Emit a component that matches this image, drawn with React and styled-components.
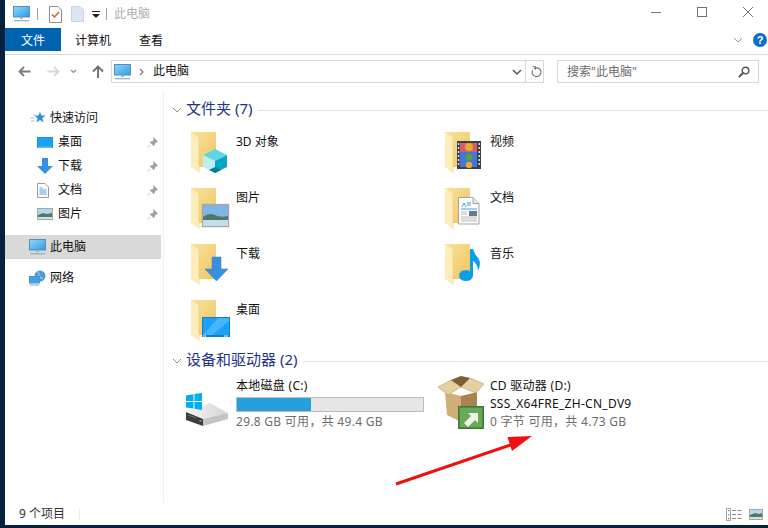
import React from "react";
import styled, { createGlobalStyle } from "styled-components";

const Global = createGlobalStyle`
  html, body { margin: 0; padding: 0; width: 768px; height: 528px; overflow: hidden; background: #04203c; }
  * { box-sizing: border-box; }
`;
const FONT = `"Noto Sans", "Noto Sans CJK SC", sans-serif`;

const Screen = styled.div`
  width: 768px; height: 528px; display: flex; position: relative;
  background: #06213d; font-family: ${FONT}; font-size: 12px; color: #111; line-height: 16px;
`;
const Win = styled.div`
  margin-left: 5px; width: 763px; height: 525px; background: #fff; display: flex; flex-direction: column;
`;
const TitleBar = styled.div`
  height: 28px; display: flex; align-items: center; padding-left: 8px; flex: none;
`;
const TitleSep = styled.span`
  width: 1px; height: 12px; background: #a0a0a0; margin: 0 ${(p) => p.$r}px 0 ${(p) => p.$l}px;
`;
const Spacer = styled.span`
  width: ${(p) => p.$w}px; flex: none;
`;
const TitleText = styled.span`
  color: #b0b0b0;
`;
const WinButtons = styled.div`
  margin-left: auto; display: flex; height: 100%;
`;
const WinButton = styled.div`
  width: ${(p) => p.$w || 46}px; margin-left: ${(p) => p.$ml || 0}px; height: 24px; display: flex; align-items: center; justify-content: center;
`;
const Ribbon = styled.div`
  height: 27px; flex: none; display: flex; border-bottom: 1px solid #dadada; padding-bottom: 2px;
`;
const FileTab = styled.div`
  width: 56px; height: 23px; padding-top: 2px; background: #0063b1; color: #fff; display: flex; align-items: center; justify-content: center;
`;
const Tab = styled.div`
  height: 23px; padding-top: 2px; display: flex; align-items: center; margin-left: ${(p) => p.$ml}px;
`;
const RibbonEnd = styled.div`
  margin-left: auto; display: flex; align-items: center; gap: 10px; padding-right: 1px; height: 24px;
`;
const AddressRow = styled.div`
  height: 36px; flex: none; display: flex; align-items: flex-start; padding: 5px 0 0 13px;
`;
const NavButtons = styled.div`
  width: 93px; height: 22px; display: flex; align-items: center;
`;
const AddressBox = styled.div`
  width: 433px; height: 23px; border: 1px solid #d9d9d9; display: flex; align-items: center; padding-left: 2px;
`;
const Crumb = styled.span`
  margin-left: 9px; padding-bottom: 1px;
`;
const AddressEnd = styled.div`
  margin-left: auto; display: flex; align-items: center; height: 100%;
`;
const AddressDivider = styled.span`
  width: 1px; height: 21px; background: #d9d9d9;
`;
const SearchBox = styled.div`
  width: 202px; height: 23px; margin-left: 13px; border: 1px solid #d9d9d9; display: flex; align-items: center;
  justify-content: space-between; padding: 0 8px 0 9px; color: #6d6d6d;
`;
const Main = styled.div`
  flex: 1; display: flex; min-height: 0;
`;
const Sidebar = styled.nav`
  width: 159px; flex: none; border-right: 1px solid #f0f0f0; padding: 15px 2px 0 0;
`;
const NavRow = styled.div`
  height: 24px; display: flex; align-items: center; margin-top: ${(p) => p.$mt || 0}px;
  padding-left: ${(p) => (p.$deep ? 32 : 24)}px; background: ${(p) => (p.$active ? "#d9d9d9" : "transparent")};
`;
const NavIconSlot = styled.span`
  width: 21px; height: 20px; flex: none; display: flex; align-items: center; padding-left: ${(p) => p.$pl || 0}px;
`;
const Pin = styled.span`
  margin-left: auto; margin-right: 3px; display: flex;
`;
const Content = styled.main`
  flex: 1; padding-top: 9px; min-width: 0;
`;
const SectionHead = styled.div`
  height: 20px; display: flex; align-items: center; margin-left: 8px; color: #1e3287; font-size: 15px;
  margin-top: ${(p) => p.$mt || 0}px;
`;
const SectionTitle = styled.span`
  margin-left: 4px; white-space: nowrap; padding-bottom: 4px;
`;
const SectionLine = styled.span`
  flex: 1; height: 1px; background: #e2e2e2; margin-left: 6px;
`;
const FolderGrid = styled.div`
  margin: 6px 0 0 26px; display: grid; grid-template-columns: 254px 254px; grid-auto-rows: 56px;
`;
const FolderTile = styled.div`
  display: flex; padding-top: 4px;
`;
const TileLabel = styled.span`
  margin: 4px 0 0 -2px;
`;
const DriveGrid = styled.div`
  margin: 6px 0 0 21px; display: grid; grid-template-columns: 254px 254px;
`;
const DriveTile = styled.div`
  display: flex;
`;
const DriveIcon = styled.div`
  width: 51px; height: 56px; margin-top: -2px; flex: none;
`;
const DriveInfo = styled.div`
  display: flex; flex-direction: column; width: 188px;
`;
const DriveLine = styled.div`
  height: ${(p) => p.$h}px; line-height: ${(p) => p.$lh || p.$h}px; margin-bottom: ${(p) => p.$mb || 0}px;
  white-space: nowrap; letter-spacing: .28px; color: ${(p) => (p.$muted ? "#6d6d6d" : "#111")};
`;
const Bar = styled.div`
  height: 15px; width: 188px; background: #e6e6e6; border: 1px solid #bcbcbc; flex: none;
`;
const BarFill = styled.div`
  height: 100%; background: #26a0da;
`;
const StatusBar = styled.footer`
  height: 22px; flex: none; display: flex; align-items: center; padding: 0 5px 0 14px; color: #333;
`;
const StatusSep = styled.span`
  width: 1px; height: 12px; background: #eee; margin-left: 14px;
`;
const StatusIcons = styled.div`
  margin-left: auto; display: flex; align-items: center; gap: 7px;
`;
const RedArrow = styled.svg`
  position: absolute; left: 390px; top: 430px;
`;
const IconSvg = styled.svg`
  flex: none; overflow: visible; display: block;
`;

const Monitor = () => (
  <svg width={17} height={16} viewBox="0 0 17 16">
    <defs>
      <linearGradient id="mon" x1="0" y1="0" x2="1" y2="1">
        <stop offset="0" stopColor="#8fd8fb" />
        <stop offset="1" stopColor="#2b9be8" />
      </linearGradient>
    </defs>
    <rect x="0.5" y="0.5" width="16" height="10.5" fill="url(#mon)" stroke="#5a8fb5" />
    <rect x="7" y="11" width="3" height="2" fill="#9ab4c6" />
    <rect x="1" y="14" width="15" height="1.3" fill="#9cb3c4" />
  </svg>
);
const Check = () => (
  <svg width="13" height="17" viewBox="0 0 13 17">
    <path d="M.5.5H9L12.5 4V16.5H.5Z" fill="#fff" stroke="#8d8d8d" />
    <path d="M3 8.5l2.5 2.5L10 6" fill="none" stroke="#e0552a" strokeWidth="1.4" />
  </svg>
);
const BlankDoc = () => (
  <svg width="13" height="16" viewBox="0 0 13 16">
    <path d="M.5.5H9L12.5 4V15.5H.5Z" fill="#dde6f3" stroke="#c9d6e8" />
  </svg>
);
const Chev = ({ d = "M1 1l4 4 4-4", w = 10, h = 6, c = "#888", sw = 1 }) => (
  <IconSvg width={w} height={h} viewBox={`0 0 ${w} ${h}`}>
    <path d={d} fill="none" stroke={c} strokeWidth={sw} />
  </IconSvg>
);
const ArrowBack = () => (
  <IconSvg width="13" height="11" viewBox="0 0 13 11">
    <path d="M12.5 5.5H2M6 1L1.5 5.5 6 10" fill="none" stroke="#7b7b7b" strokeWidth="1.8" />
  </IconSvg>
);
const ArrowForward = () => (
  <IconSvg width="13" height="11" viewBox="0 0 13 11">
    <path d="M.5 5.5H11M7 1l4.500 4.500L7 10" fill="none" stroke="#d8d8d8" strokeWidth="1.8" />
  </IconSvg>
);
const ArrowUp = () => (
  <IconSvg width="12" height="13" viewBox="0 0 12 13">
    <path d="M6 13V2M1 6.5L6 1.5l5 5" fill="none" stroke="#6f6f6f" strokeWidth="1.9" />
  </IconSvg>
);
const Refresh = () => (
  <svg width="11" height="12" viewBox="0 0 11 12">
    <path d="M3 2.6a4.4 4.4 0 1 1-1.4 1.6" fill="none" stroke="#777" strokeWidth="1.2" />
    <path d="M1.5 .8h3v3" fill="none" stroke="#777" strokeWidth="1.1" />
  </svg>
);
const Search = () => (
  <svg width="12" height="12" viewBox="0 0 12 12">
    <circle cx="7.5" cy="4.5" r="3.3" fill="none" stroke="#555" strokeWidth="1.4" />
    <path d="M5 7L1 11" stroke="#555" strokeWidth="1.9" />
  </svg>
);
const Help = () => (
  <svg width="14" height="14" viewBox="0 0 14 14">
    <circle cx="7" cy="7" r="7" fill="#0a6fc8" />
    <text x="7" y="11" textAnchor="middle" fontSize="11" fontWeight="700" fill="#fff" fontFamily="Liberation Sans">?</text>
  </svg>
);
const PinIcon = () => (
  <svg width="11" height="11" viewBox="0 0 11 11">
    <path d="M6.5.5l4 4-1.2.6-2 2-.3 2-4-4 2-.3 2-2zM3 8L.5 10.5" fill="#9aa0a5" stroke="#9aa0a5" strokeWidth=".7" />
  </svg>
);
const Star = () => (
  <svg width="16" height="14" viewBox="0 0 16 14">
    <path d="M10 .5l1.4 4 4.2.1-3.3 2.6 1.2 4.2L10 9l-3.6 2.4 1.2-4.2-3.3-2.6 4.2-.1z" fill="#2f8fdc" />
    <path d="M0 7h4M1 10h3.500M3 4h2" stroke="#8cc4ee" />
  </svg>
);
const SmallDesktop = () => (
  <svg width="16" height="11" viewBox="0 0 16 11">
    <rect width="16" height="11" fill="#1590e8" />
    <rect x=".8" y=".8" width="14.400" height="8.600" fill="#1ba1f5" />
    <rect x="1" y="9.800" width="14" height=".6" fill="#dff" />
  </svg>
);
const SmallDown = () => (
  <svg width="16" height="16" viewBox="0 0 16 16">
    <path d="M5 0h6v8h5l-8 8-8-8h5z" fill="#3b8fe0" />
  </svg>
);
const SmallDoc = () => (
  <svg width="12" height="15" viewBox="0 0 12 15">
    <path d="M.5.5H8L11.500 4V14.500H.5Z" fill="#fff" stroke="#9a9a9a" />
    <path d="M2.500 5h3M2.500 7h7M2.500 9h7M2.500 11h7" stroke="#4b9fe0" />
  </svg>
);
const SmallPic = () => (
  <svg width="16" height="12" viewBox="0 0 16 12">
    <rect x=".5" y=".5" width="15" height="11" fill="#b6d6ef" stroke="#a6a6a6" />
    <path d="M1 7l5-2 4 1 5-1v6H1z" fill="#56796b" />
    <rect x="1" y="9" width="14" height="2" fill="#cfe2ee" />
  </svg>
);
const Network = () => (
  <svg width="17" height="16" viewBox="0 0 17 16">
    <circle cx="11" cy="6" r="5.500" fill="#4c9bd1" />
    <path d="M8 1.500c2 1 3 3 1 5l5 2" fill="none" stroke="#b9dff3" />
    <rect x=".5" y="6.500" width="10" height="6.500" fill="#38a7ee" stroke="#5a8fb5" />
    <rect x="1" y="14.300" width="9" height="1.200" fill="#8fb2cc" />
  </svg>
);

const Folder = ({ children }) => (
  <IconSvg width="48" height="48" viewBox="0 0 48 48">
    <defs>
      <linearGradient id="fb" x1="0" y1="0" x2="1" y2="1">
        <stop offset="0" stopColor="#f9e39c" />
        <stop offset="1" stopColor="#efc560" />
      </linearGradient>
    </defs>
    <rect x="1" y="2" width="25" height="35" fill="url(#fb)" />
    <path d="M1 2l8 6v35l-8-6z" fill="#fdeeb9" />
    <path d="M9 8v35" stroke="#e8cf8a" strokeWidth=".6" />
    {children}
  </IconSvg>
);
const Cube = () => (
  <g>
    <path d="M25 19l12 6-12 6-12-6z" fill="#5fd6e8" />
    <path d="M13 25l12 6v12l-12-6z" fill="#bdeef2" />
    <path d="M37 25l-12 6v12l12-6z" fill="#07a5cc" />
    <path d="M25 37l-6 3 6 3 6-3z" fill="#0a7c98" />
  </g>
);
const Picture = () => (
  <g>
    <rect x="12.500" y="18.500" width="26" height="22" fill="#7fb6e6" stroke="#a8a8a8" strokeWidth="1.400" />
    <path d="M13 31c4-3 8-4 12-2s8 2 13 1v5H13z" fill="#4f7866" />
    <rect x="13" y="34" width="25" height="6" fill="#c6dce9" />
  </g>
);
const Down = () => <path d="M22 15h9v12h7L26.500 39 15 27h7z" fill="#3b8fe0" stroke="#2f7cc8" strokeWidth=".5" />;
const Desktop = () => (
  <g>
    <rect x="12" y="19" width="28" height="20" fill="#0f7fc9" />
    <rect x="13" y="20" width="26" height="17" fill="#1ba1f8" />
    <path d="M13 37l15-17h11v3L22 37z" fill="#46b6fb" />
    <rect x="13" y="37.500" width="3" height="1" fill="#dff" />
    <rect x="34" y="37.500" width="4" height="1" fill="#dff" />
  </g>
);
const Film = () => (
  <g>
    <rect x="13" y="11" width="24" height="28" fill="#3a3f48" />
    <rect x="16" y="13" width="17" height="24" fill="#3f78dc" />
    <rect x="16" y="13" width="17" height="9" fill="#d95a6a" />
    <circle cx="25" cy="17" r="4" fill="#e8a92e" />
    <circle cx="25" cy="27" r="3.500" fill="#5aa03c" />
    <circle cx="25" cy="35" r="3.200" fill="#e8a92e" />
    {[13, 17, 21, 25, 29, 33].map((y) => (
      <g key={y}>
        <rect x="13.800" y={y} width="1.500" height="2" fill="#ddd" />
        <rect x="34.500" y={y} width="1.500" height="2" fill="#ddd" />
      </g>
    ))}
  </g>
);
const Doc = () => (
  <g>
    <path d="M14.500 11.500H29l6 6v20.500H14.500z" fill="#fff" stroke="#a3a3a3" />
    <path d="M29 11.500V17.500h6" fill="#e6e6e6" stroke="#a3a3a3" />
    <path d="M18 21l2-4 2 4" fill="none" stroke="#3f9fe0" />
    <path d="M23 17h4M23 19h4M17 23h16" stroke="#3f9fe0" />
    <rect x="25" y="25" width="8" height="5" fill="#5b7f8f" />
    <path d="M17 26h6M17 28h6M17 31h16M17 33h16M17 35h16" stroke="#bbb" />
  </g>
);
const Note = () => (
  <g>
    <ellipse cx="22" cy="33.500" rx="7" ry="5.500" fill="#0a9fe8" />
    <path d="M26 7h3c1 4 3 6 5 9 3 4 2 9 0 13 0-5-2-8-5-10v14h-3z" fill="#0a9fe8" />
  </g>
);
const Drive = () => (
  <IconSvg width="51" height="56" viewBox="0 0 51 56">
    <defs>
      <linearGradient id="dr" x1="0" y1="0" x2="1" y2="0">
        <stop offset="0" stopColor="#f4f4f4" />
        <stop offset="1" stopColor="#d6d6d6" />
      </linearGradient>
    </defs>
    <path d="M1 37l24-9 18 10-25 6z" fill="url(#dr)" />
    <path d="M18 44l25-6v6l-25 7z" fill="#c4c4c4" />
    <path d="M1 37l17 7v7L1 45z" fill="#3d3d3d" />
    <path d="M3 40l8 3" stroke="#777" />
    <rect x="14.500" y="45" width="2" height="1.500" fill="#33d133" />
    <path d="M1 20.500l7.500-1.200V26H1zM9.500 19.100L17 18v8H9.500zM1 27h7.500v6.500L1 32.500zM9.500 27H17v8l-7.500-1.200z" fill="#00adef" />
  </IconSvg>
);
const BoxIcon = () => (
  <IconSvg width="51" height="56" viewBox="0 0 51 56">
    <path d="M6 17l16 4v26L8 40z" fill="#cfae78" />
    <path d="M22 21l16-4v24l-16 6z" fill="#a98350" />
    <path d="M-1 12l13-7 10 7-13 8zM22 12l9-9 14 6-8 9z" fill="#e6d0a2" stroke="#b99a63" strokeWidth=".6" />
    <path d="M12 5l10 7 9-9-9-2z" fill="#7d5f34" />
    <rect x="19.500" y="31.500" width="25" height="22" fill="#4f8b42" stroke="#3d7a33" />
    <rect x="21" y="33" width="22" height="19" fill="#6aa95a" />
    <path d="M25 48l7-7-3-3h10v10l-3-3-7 7z" fill="#eef3ea" />
  </IconSvg>
);
const ListView = () => (
  <svg width="16" height="13" viewBox="0 0 16 13">
    <rect x=".5" y=".5" width="4" height="12" fill="#fff" stroke="#a5a5a5" />
    <rect x="2" y="2" width="1.200" height="1.200" fill="#777" />
    <rect x="2" y="6" width="1.200" height="1.200" fill="#3b9fe0" />
    <rect x="2" y="10" width="1.200" height="1.200" fill="#d9342b" />
    <path d="M6 2.500h4M11.500 2.500h4M6 6.500h4M11.500 6.500h4M6 10.500h4M11.500 10.500h4" stroke="#8a8a8a" />
  </svg>
);
const TileView = () => (
  <svg width="14" height="11" viewBox="0 0 14 11">
    <rect x=".5" y=".5" width="13" height="10" fill="#b9d9f0" stroke="#a5a5a5" />
    <path d="M1 6l5-2 4 1 3-1v6H1z" fill="#4f7866" />
    <rect x="1" y="8" width="12" height="2" fill="#cfe2ee" />
  </svg>
);

const folders = [
  ["3D 对象", <Cube />], ["视频", <Film />],
  ["图片", <Picture />], ["文档", <Doc />],
  ["下载", <Down />], ["音乐", <Note />],
  ["桌面", <Desktop />],
];
const quick = [
  ["桌面", <SmallDesktop />], ["下载", <SmallDown />], ["文档", <SmallDoc />], ["图片", <SmallPic />],
];

export default function App() {
  return (
    <Screen>
      <Global />
      <Win>
        <TitleBar>
          <Monitor />
          <TitleSep $l={7} $r={11} />
          <Check />
          <Spacer $w={9} />
          <BlankDoc />
          <Spacer $w={8} />
          <IconSvg width="8" height="7" viewBox="0 0 8 7">
            <path d="M0 0h8v1H0zM0 3h8L4 7z" fill="#222" />
          </IconSvg>
          <TitleSep $l={6} $r={7} />
          <TitleText>此电脑</TitleText>
          <WinButtons>
            <WinButton><Chev d="M0 .5h10" w={10} h={1} c="#777" /></WinButton>
            <WinButton><svg width="10" height="10"><rect x=".5" y=".5" width="9" height="9" fill="none" stroke="#777" /></svg></WinButton>
            <WinButton $w={40} $ml={3}><Chev d="M0 0l10 10M10 0L0 10" w={10} h={10} c="#777" /></WinButton>
          </WinButtons>
        </TitleBar>
        <Ribbon>
          <FileTab>文件</FileTab>
          <Tab $ml={14}>计算机</Tab>
          <Tab $ml={28}>查看</Tab>
          <RibbonEnd>
            <Chev w={10} h={6} c="#999" />
            <Help />
          </RibbonEnd>
        </Ribbon>
        <AddressRow>
          <NavButtons>
            <ArrowBack />
            <Spacer $w={16} />
            <ArrowForward />
            <Spacer $w={10} />
            <Chev w={7} h={5} d="M1 1l2.500 2.500L6 1" c="#8a8a8a" sw={1.2} />
            <Spacer $w={15} />
            <ArrowUp />
          </NavButtons>
          <AddressBox>
            <Monitor />
            <Spacer $w={8} />
            <Chev d="M1 1l3 3-3 3" w={5} h={8} c="#777" sw={1.2} />
            <Crumb>此电脑</Crumb>
            <AddressEnd>
              <Chev d="M1 1l4 4 4-4" w={10} h={6} c="#555" sw={1.5} />
              <Spacer $w={3} />
              <AddressDivider />
              <Spacer $w={5} />
              <Refresh />
              <Spacer $w={1} />
            </AddressEnd>
          </AddressBox>
          <SearchBox>
            <span>搜索"此电脑"</span>
            <Search />
          </SearchBox>
        </AddressRow>
        <Main>
          <Sidebar>
            <NavRow><NavIconSlot $pl={1}><Star /></NavIconSlot>快速访问</NavRow>
            {quick.map(([t, i]) => (
              <NavRow $deep key={t}>
                <NavIconSlot>{i}</NavIconSlot>
                {t}
                <Pin><PinIcon /></Pin>
              </NavRow>
            ))}
            <NavRow $mt={9} $active><NavIconSlot><Monitor /></NavIconSlot>此电脑</NavRow>
            <NavRow $mt={7}><NavIconSlot><Network /></NavIconSlot>网络</NavRow>
          </Sidebar>
          <Content>
            <SectionHead>
              <Chev w={10} h={6} c="#8a8a8a" />
              <SectionTitle>文件夹 (7)</SectionTitle>
              <SectionLine />
            </SectionHead>
            <FolderGrid>
              {folders.map(([t, icon]) => (
                <FolderTile key={t}>
                  <Folder>{icon}</Folder>
                  <TileLabel>{t}</TileLabel>
                </FolderTile>
              ))}
            </FolderGrid>
            <SectionHead $mt={1}>
              <Chev w={10} h={6} c="#8a8a8a" />
              <SectionTitle>设备和驱动器 (2)</SectionTitle>
              <SectionLine />
            </SectionHead>
            <DriveGrid>
              <DriveTile>
                <DriveIcon><Drive /></DriveIcon>
                <DriveInfo>
                  <DriveLine $h={18} $mb={2}>本地磁盘 (C:)</DriveLine>
                  <Bar><BarFill style={{ width: "39.7%" }} /></Bar>
                  <DriveLine $muted $h={20}>29.8 GB 可用，共 49.4 GB</DriveLine>
                </DriveInfo>
              </DriveTile>
              <DriveTile>
                <DriveIcon><BoxIcon /></DriveIcon>
                <DriveInfo>
                  <DriveLine $h={18}>CD 驱动器 (D:)</DriveLine>
                  <DriveLine $h={17}>SSS_X64FRE_ZH-CN_DV9</DriveLine>
                  <DriveLine $muted $h={20}>0 字节 可用，共 4.73 GB</DriveLine>
                </DriveInfo>
              </DriveTile>
            </DriveGrid>
          </Content>
        </Main>
        <StatusBar>
          9 个项目
          <StatusSep />
          <StatusIcons>
            <ListView />
            <TileView />
          </StatusIcons>
        </StatusBar>
      </Win>
      <RedArrow width="150" height="60" viewBox="0 0 150 60">
        <path d="M6 54L122 14.500" stroke="#f01010" strokeWidth="3" />
        <path d="M142 6L117.500 7 122 21z" fill="#f01010" />
      </RedArrow>
    </Screen>
  );
}
